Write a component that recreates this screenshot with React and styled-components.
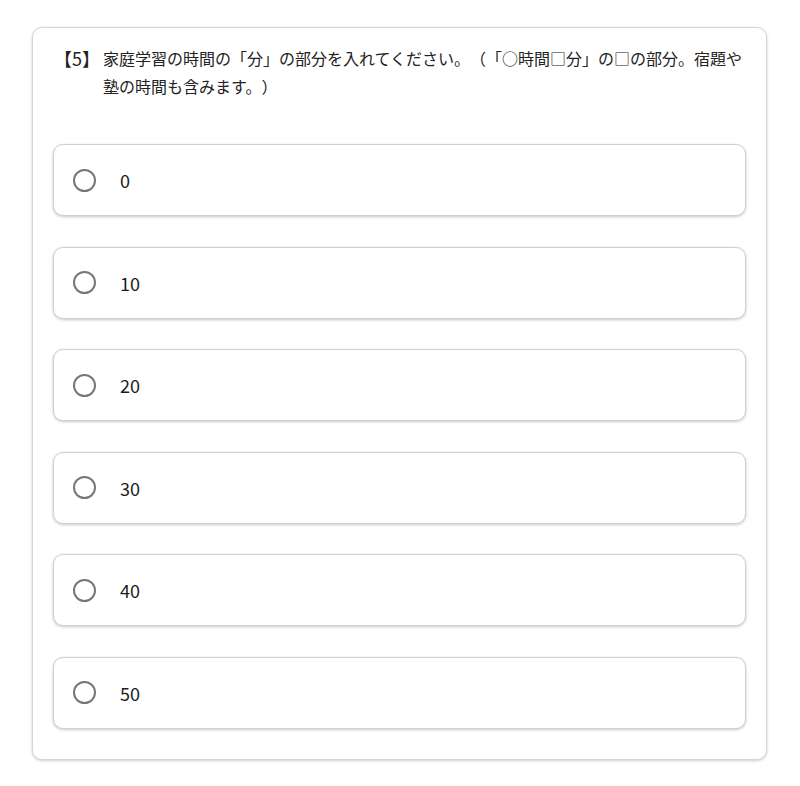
import React, { useState } from 'react'
import styled, { createGlobalStyle } from 'styled-components'

const GlobalStyle = createGlobalStyle`
  body {
    margin: 0;
    background: #ffffff;
    font-family: "Noto Sans CJK JP", "Noto Sans", sans-serif;
    color: #222;
    text-spacing-trim: space-all;
  }
`

const Page = styled.div`
  padding: 27px 33px 26px 32px;
`

const Card = styled.div`
  border: 1px solid #d6d6d6;
  border-radius: 10px;
  box-shadow: 0 1px 3px rgba(0, 0, 0, 0.2);
  padding: 16px 20px 30px 20px;
  background: #fff;
`

const Question = styled.div`
  display: flex;
  align-items: flex-start;
  gap: 3px;
  font-size: 16px;
  line-height: 28px;
  margin: 0 -6px 44px 1px;
`

const Label = styled.span`
  flex: none;
  font-size: 18px;
  font-weight: 400;
`

const QuestionText = styled.p`
  flex: 1;
  margin: 0;
`

const Options = styled.div`
  display: flex;
  flex-direction: column;
  gap: 30.6px;
`

const Option = styled.label`
  display: flex;
  align-items: center;
  gap: 24px;
  height: 72px;
  box-sizing: border-box;
  padding-left: 19px;
  border: 1px solid #d0d0d0;
  border-radius: 10px;
  box-shadow: 0 1px 3px rgba(0, 0, 0, 0.22);
  background: #fff;
  cursor: pointer;
`

const Radio = styled.span`
  width: 23px;
  height: 23px;
  box-sizing: border-box;
  border-radius: 50%;
  border: 2px solid ${props => props.checked ? '#1a73e8' : '#777'};
  display: flex;
  align-items: center;
  justify-content: center;

  &::after {
    content: '';
    width: 11px;
    height: 11px;
    border-radius: 50%;
    background: #1a73e8;
    display: ${props => props.checked ? 'block' : 'none'};
  }
`

const OptionText = styled.span`
  font-size: 18px;
  color: #1c1c1c;
`

const choices = ['0', '10', '20', '30', '40', '50']

const App = () => {
  const [selected, setSelected] = useState(null)

  return (
    <>
      <GlobalStyle />
      <Page>
        <Card>
          <Question>
            <Label>【5】</Label>
            <QuestionText>
              家庭学習の時間の「分」の部分を入れてください。（「○時間□分」の□の部分。宿題や塾の時間も含みます。）
            </QuestionText>
          </Question>
          <Options>
            {choices.map(c => (
              <Option key={c} onClick={() => setSelected(c)}>
                <Radio checked={selected === c} />
                <OptionText>{c}</OptionText>
              </Option>
            ))}
          </Options>
        </Card>
      </Page>
    </>
  )
}

export default App
